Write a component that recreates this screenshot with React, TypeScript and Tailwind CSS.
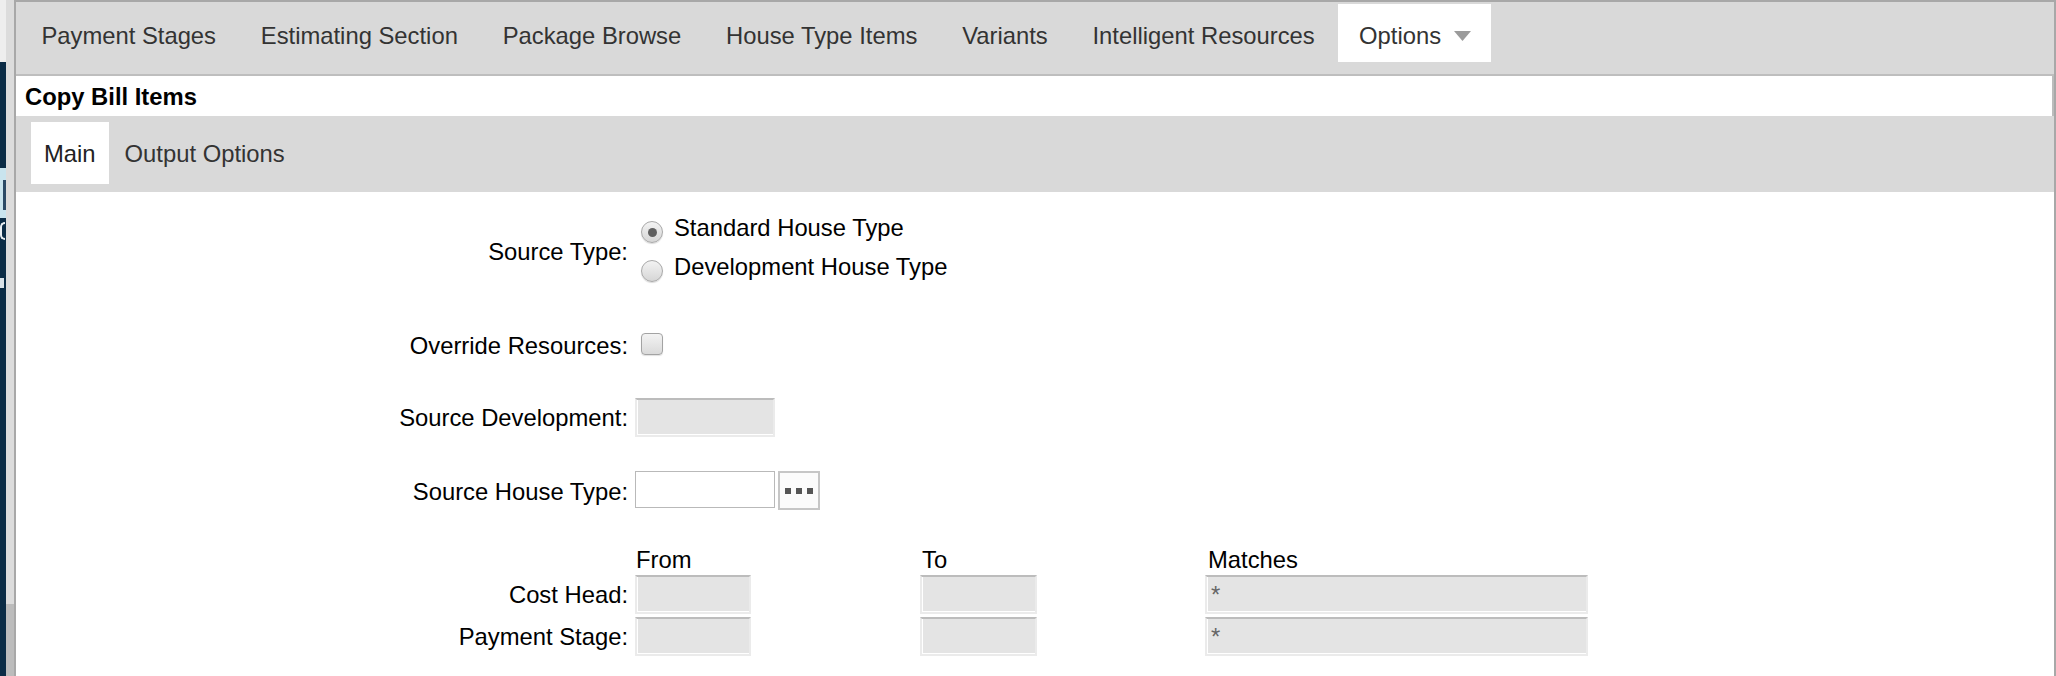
import React from 'react';

const topTabs = ['Payment Stages', 'Estimating Section', 'Package Browse', 'House Type Items', 'Variants', 'Intelligent Resources'];

const lockedInput =
    'h-[39px] bg-[#e4e4e4] border-2 border-[#ebebeb] border-t-[#bcbcbc] shadow-[inset_1px_-1px_0_#ffffff] px-[4px] text-[#666] outline-none';

const Radio = ({ checked }: { checked?: boolean }) => (
    <span className="w-[22px] h-[22px] rounded-full border border-[#a9a9a9] bg-linear-to-b from-[#f3f3f3] to-[#d6d6d6] shadow-[0_1px_1px_rgba(0,0,0,0.15)] flex items-center justify-center shrink-0">
        {checked && <span className="w-[9px] h-[9px] rounded-full bg-[#5f5f5f]" />}
    </span>
);

const Label = ({ children, className = '' }: { children: React.ReactNode; className?: string }) => (
    <div className={`w-[612px] shrink-0 text-right text-black ${className}`}>{children}</div>
);

const App: React.FC = () => {
    return (
        <div className="flex w-[2056px] h-[676px] overflow-hidden bg-white text-[23.8px] leading-[27px]" style={{ fontFamily: '"Liberation Sans", Arial, Helvetica, sans-serif' }}>
            {/* app behind the window */}
            <div className="w-[6px] shrink-0 flex flex-col bg-[#0b2c46]">
                <div className="h-[62px] bg-[#eeeeee]" />
                <div className="mt-[106px] h-[50px] bg-[#c9e4ee] overflow-hidden">
                    <span className="block w-[3px] h-[30px] mt-[12px] ml-[3px] bg-[#2b4a66]" />
                </div>
                <span className="block w-[5px] h-[18px] mt-[4px] rounded-l-full border-2 border-r-0 border-[#e8eef2]" />
                <span className="block w-[4px] h-[10px] mt-[38px] bg-[#d9e2e8]" />
            </div>
            {/* window frame */}
            <div className="w-[8px] shrink-0 flex flex-col">
                <div className="h-[604px] bg-[#dcdcdc]" />
                <div className="flex-1 bg-[#bcbcbc]" />
            </div>

            <div className="flex-1 flex flex-col border-l-2 border-r-2 border-t-2 border-[#a8a8a8]">
                {/* top tabs */}
                <div className="h-[74px] shrink-0 bg-[#d9d9d9] border-b-2 border-[#bebebe] flex items-start pl-[3px]">
                    {topTabs.map((t) => (
                        <div key={t} className="h-[60px] px-[22.4px] pt-[6px] flex items-center text-[#333]">
                            {t}
                        </div>
                    ))}
                    <div className="h-[58px] mt-[2px] ml-[1px] pl-[21px] pr-[20px] pt-[4px] bg-white flex items-center text-[#333]">
                        Options
                        <svg width="17" height="10" viewBox="0 0 17 10" className="ml-[13px] mt-[1px]">
                            <polygon points="0,0 17,0 8.5,10" fill="#9b9b9b" />
                        </svg>
                    </div>
                </div>

                {/* title */}
                <div className="h-[40px] shrink-0 bg-white border-r-2 border-[#bcbcbc] flex items-center pl-[9px] font-bold text-black">
                    Copy Bill Items
                </div>

                {/* sub tabs */}
                <div className="h-[76px] shrink-0 bg-[#d9d9d9] flex items-start pl-[15px] pt-[6px]">
                    <div className="h-[62px] bg-white px-[13px] flex items-center text-[#222]">Main</div>
                    <div className="h-[62px] pl-[16px] flex items-center text-[#333]">Output Options</div>
                </div>

                {/* form */}
                <div className="flex flex-col">
                    <div className="flex mt-[16px]">
                        <Label className="self-center pt-[8px]">Source Type:</Label>
                        <div className="ml-[7px] flex flex-col">
                            <div className="h-[39px] flex items-center">
                                <span className="ml-[6px] mt-[9px]"><Radio checked /></span>
                                <span className="ml-[11px] text-black">Standard House Type</span>
                            </div>
                            <div className="h-[39px] flex items-center">
                                <span className="ml-[6px] mt-[9px]"><Radio /></span>
                                <span className="ml-[11px] text-black">Development House Type</span>
                            </div>
                        </div>
                    </div>

                    <div className="flex items-center h-[40px] mt-[39px]">
                        <Label>Override Resources:</Label>
                        <span className="ml-[13px] mb-[3px] w-[22px] h-[22px] rounded-[4px] border border-[#a3a3a3] bg-linear-to-b from-[#f3f3f3] to-[#dadada] shadow-[0_1px_1px_rgba(0,0,0,0.12)]" />
                    </div>

                    <div className="flex items-center h-[39px] mt-[33px]">
                        <Label>Source Development:</Label>
                        <input readOnly value="" className={`ml-[7px] w-[140px] ${lockedInput}`} />
                    </div>

                    <div className="flex items-start h-[39px] mt-[34px]">
                        <Label className="self-center pt-[2px]">Source House Type:</Label>
                        <input readOnly value="" className="ml-[7px] w-[140px] h-[37px] bg-white border border-[#b9b9b9] outline-none" />
                        <button className="ml-[3px] w-[42px] h-[39px] bg-[#fbfbfb] border-2 border-[#c6c6c6] flex items-center justify-center gap-[5px]">
                            <span className="w-[6px] h-[6px] bg-[#555]" />
                            <span className="w-[6px] h-[6px] bg-[#555]" />
                            <span className="w-[6px] h-[6px] bg-[#555]" />
                        </button>
                    </div>

                    <div className="flex items-center h-[30px] mt-[34px]">
                        <div className="w-[612px] shrink-0" />
                        <div className="ml-[7px] grid grid-cols-[285px_285px_auto] text-black">
                            <span className="pl-[1px]">From</span>
                            <span className="pl-[2px]">To</span>
                            <span className="pl-[3px]">Matches</span>
                        </div>
                    </div>

                    <div className="flex items-center h-[39px] mt-[1px]">
                        <Label>Cost Head:</Label>
                        <div className="ml-[7px] grid grid-cols-[285px_285px_auto] items-center">
                            <input readOnly value="" className={`w-[116px] ${lockedInput}`} />
                            <input readOnly value="" className={`w-[117px] ${lockedInput}`} />
                            <input readOnly value="*" className={`w-[383px] ${lockedInput}`} />
                        </div>
                    </div>

                    <div className="flex items-center h-[39px] mt-[3px]">
                        <Label>Payment Stage:</Label>
                        <div className="ml-[7px] grid grid-cols-[285px_285px_auto] items-center">
                            <input readOnly value="" className={`w-[116px] ${lockedInput}`} />
                            <input readOnly value="" className={`w-[117px] ${lockedInput}`} />
                            <input readOnly value="*" className={`w-[383px] ${lockedInput}`} />
                        </div>
                    </div>
                </div>
            </div>
        </div>
    );
};

export default App;
